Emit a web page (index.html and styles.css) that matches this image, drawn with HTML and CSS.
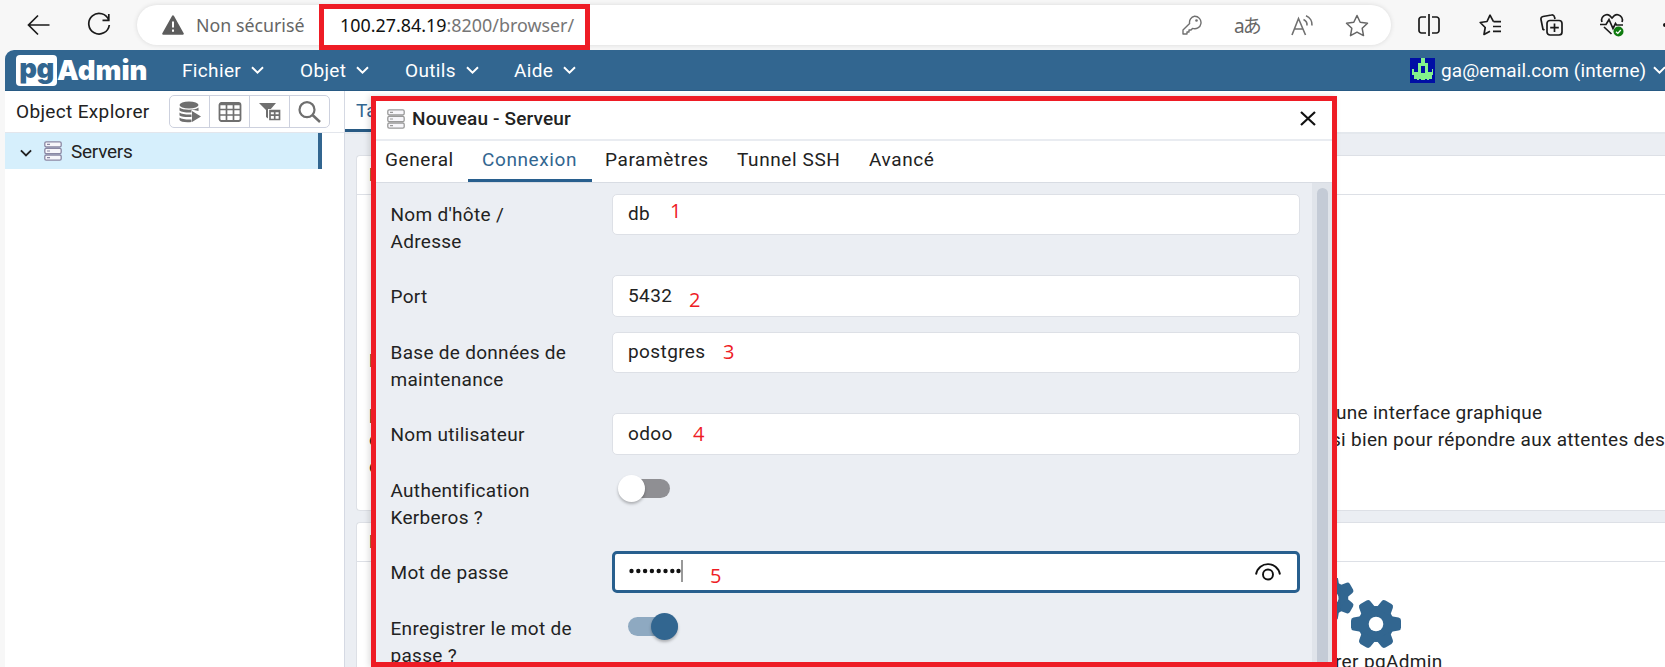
FILE: index.html
```
<!DOCTYPE html>
<html lang="fr">
<head>
<meta charset="utf-8">
<title>pgAdmin 4</title>
<link rel="stylesheet" href="styles.css">
</head>
<body>
<svg class="defs" width="0" height="0">
  <symbol id="chev" viewBox="0 0 13 8"><path d="M1 1.2 6.5 6.6 12 1.2" fill="none" stroke="currentColor" stroke-width="2"/></symbol>
  <symbol id="server" viewBox="0 0 18 20">
    <g fill="#f7f6fa" stroke="currentColor" stroke-width="1.3">
      <rect x=".8" y=".8" width="16.4" height="5.2" rx="1.4"/><rect x=".8" y="7.4" width="16.4" height="5.2" rx="1.4"/><rect x=".8" y="14" width="16.4" height="5.2" rx="1.4"/>
    </g>
    <path d="M3 3.4h3M3 10h3M3 16.6h3" stroke="currentColor" stroke-width="1.2"/>
  </symbol>
</svg>
<div class="window">
  <header class="browser">
    <svg class="nav-back" width="24" height="22" viewBox="0 0 24 22"><path d="M22.500 11H2M11 1.500 1.500 11l9.500 9.500" fill="none" stroke="#1b1b1b" stroke-width="1.700"/></svg>
    <svg class="nav-reload" width="24" height="26" viewBox="0 0 24 26"><path d="M21.800 8.300A10.300 10.300 0 1 0 22.300 13M21.800 2v6.300h-6.300" fill="none" stroke="#1b1b1b" stroke-width="1.700"/></svg>
    <div class="omnibox">
      <svg class="warn" width="22" height="20" viewBox="0 0 22 20"><path d="M11 1.300 20.800 18.700H1.200z" fill="#5d5d5d" stroke="#5d5d5d" stroke-width="2" stroke-linejoin="round"/><path d="M11 6.500v6M11 14.500v2.300" stroke="#fff" stroke-width="2"/></svg>
      <span class="insecure">Non sécurisé</span>
      <span class="url"><b>100.27.84.19</b>:8200/browser/</span>
      <div class="omni-icons">
        <svg class="i-key" width="20" height="20" viewBox="0 0 20 20"><path d="M12.500 1.200a6.300 6.300 0 1 1-2 12.200L9 15H7v2H5v2H1v-4l6.600-6.500a6.300 6.300 0 0 1 4.900-7.300z" fill="none" stroke="#707070" stroke-width="1.400" stroke-linejoin="round"/><circle cx="14.500" cy="5.500" r="1.300" fill="#707070"/></svg>
        <span class="i-tr">aあ</span>
        <svg class="i-read" width="23" height="21" viewBox="0 0 23 21"><path d="M1 20 7.500 3.500l7 16.500M3.500 14h8.500M12.500 4.500a6 6 0 0 1 3.500 6M15 .800a9.500 9.500 0 0 1 6 9.700" fill="none" stroke="#707070" stroke-width="1.600"/></svg>
        <svg class="i-star" width="24" height="23" viewBox="0 0 24 23"><path d="m12 1.500 3.200 6.700 7.300 1-5.300 5.100 1.300 7.300-6.500-3.500-6.500 3.500 1.300-7.300L1.500 9.200l7.300-1z" fill="none" stroke="#666" stroke-width="1.500" stroke-linejoin="round"/></svg>
      </div>
    </div>
    <div class="tools">
      <svg class="t-split" width="22" height="22" viewBox="0 0 22 22"><path d="M8 3H3.500A2.500 2.500 0 0 0 1 5.500v11A2.500 2.500 0 0 0 3.500 19H8M14 3h4.500A2.500 2.500 0 0 1 21 5.500v11a2.500 2.500 0 0 1-2.500 2.500H14M11 0v22" fill="none" stroke="#1b1b1b" stroke-width="1.700"/></svg>
      <svg class="t-fav" width="23" height="22" viewBox="0 0 23 22"><path d="M14.500 7.700 11 1.200 8 7.500 1.200 8.500l5 5-1.200 7L11 17.300M14.500 7.700H22M14 12.500h8M14 17.300h8" fill="none" stroke="#1b1b1b" stroke-width="1.700" stroke-linejoin="round"/></svg>
      <svg class="t-col" width="23" height="22" viewBox="0 0 23 22"><path d="M4.500 16 3 15.300 1 5.500a2.500 2.500 0 0 1 2-3L11.500 1a2.500 2.500 0 0 1 3 2l.5 2" fill="none" stroke="#1b1b1b" stroke-width="1.700"/><rect x="7" y="6.500" width="15" height="14.500" rx="3" fill="none" stroke="#1b1b1b" stroke-width="1.700"/><path d="M14.500 9.500v8.500M10.200 13.700h8.600" stroke="#1b1b1b" stroke-width="1.700"/></svg>
      <svg class="t-heart" width="24" height="24" viewBox="0 0 24 24"><path d="M2 9C0 4 6 0 9.500 2.500L12 5l2.500-2.500C18 0 24 4 22 9M0 11.500h6l3-5 4 9 2.500-5 1 1.500H23M4 14l7.500 7" fill="none" stroke="#1b1b1b" stroke-width="1.700"/><circle cx="18.500" cy="18.500" r="5" fill="#0f7b0f"/><path d="m16 18.700 1.800 1.700 3-3.400" fill="none" stroke="#fff" stroke-width="1.300"/></svg>
      <span class="t-more"></span>
    </div>
  </header>
  <div class="url-mark"></div>

  <div class="app">
    <nav class="menubar">
      <div class="logo"><span class="pg">pg</span><span class="admin">Admin</span></div>
      <span class="menu m1">Fichier<svg><use href="#chev"/></svg></span>
      <span class="menu m2">Objet<svg><use href="#chev"/></svg></span>
      <span class="menu m3">Outils<svg><use href="#chev"/></svg></span>
      <span class="menu m4">Aide<svg><use href="#chev"/></svg></span>
      <div class="user">
        <svg class="avatar" width="25" height="25" viewBox="0 0 25 25"><path fill="#000fa5" d="M0 0h25v25H0z"/><path fill="#83f28b" d="M11 0h4v5h3v9h4v-3h1v6h-1v4h-3v1h-2v-1h-2v1h-4v-1H9v1H7v-1H4v-4H2v-6h2v3h4V5h3z"/><path fill="#000fa5" d="M11 8h4v7h-4z"/></svg>
        <span class="mail">ga@email.com (interne)</span>
        <svg class="user-chev"><use href="#chev"/></svg>
      </div>
    </nav>
    <div class="main">
      <aside class="explorer">
        <div class="exp-head">
          <span class="exp-title">Object Explorer</span>
          <div class="btns">
            <span><svg width="22" height="22" viewBox="0 0 22 22" fill="#6f6f6f"><ellipse cx="10" cy="4" rx="9.500" ry="3.500"/><path d="M.5 6.500c3 3 16 3 19 0V10l-7-1.500v3C7 11.700 2.500 11 .5 9.500zM.5 11.500c2 1.500 6.500 2.200 12 2V16C7 16.300 2.500 15.800.5 14.500zM.5 16.500c2 1.500 6.500 2.200 12 2V21C6.500 21.500 1.500 21 .5 19zM13 10l9 5.500-9 5.500z"/></svg></span>
            <span><svg width="24" height="20" viewBox="0 0 24 20"><rect x="1.500" y="1" width="21" height="18" rx="2" fill="none" stroke="#6f6f6f" stroke-width="1.800"/><path d="M1.500 2.500h21M1.500 7.500h21M1.500 13h21M8.500 2v17M15.500 2v17" stroke="#6f6f6f" stroke-width="1.700"/></svg></span>
            <span><svg width="22" height="18" viewBox="0 0 22 18"><path d="M0 0h17l-6 7v10l-4-3V7z" fill="#6f6f6f"/><path d="M9 6h13v12H9z" fill="#fff"/><path d="M11 7.500h9.500v9H11zM11 8.500h9.500M11 12.200h9.500M15.700 8v8.500" fill="none" stroke="#6f6f6f" stroke-width="1.700"/></svg></span>
            <span><svg width="24" height="22" viewBox="0 0 24 22"><circle cx="9" cy="8.700" r="7.500" fill="none" stroke="#6f6f6f" stroke-width="2.200"/><path d="m14.500 14 7.500 7" stroke="#6f6f6f" stroke-width="2.500"/></svg></span>
          </div>
        </div>
        <div class="tree-row">
          <svg class="tree-chev"><use href="#chev"/></svg>
          <svg class="srv"><use href="#server"/></svg>
          <span>Servers</span>
        </div>
      </aside>
      <section class="dash">
        <div class="dash-tabs"><span class="dash-tab">Ta</span></div>
        <div class="card welcome">
          <div class="card-head">B</div>
          <p class="feat">F</p>
          <div class="wtext">
            <div class="wline"><span>p</span><span class="w1">une interface graphique</span></div>
            <div class="wline"><span>d</span><span class="w2">si bien pour répondre aux attentes des</span></div>
            <div class="wline"><span>d</span></div>
          </div>
        </div>
        <div class="card links">
          <div class="card-head">L</div>
          <div class="quick">
            <svg width="82" height="72" viewBox="0 0 82 72" fill="#326690">
              <g id="g" transform="translate(55 46)"><circle r="18"/><path id="tooth" d="M-8-14-6.500-22.500Q-6-25-3.500-25h7Q6-25 6.500-22.500L8-14z" transform="rotate(30)"/><use href="#tooth" transform="rotate(60)"/><use href="#tooth" transform="rotate(120)"/><use href="#tooth" transform="rotate(180)"/><use href="#tooth" transform="rotate(240)"/><use href="#tooth" transform="rotate(300)"/><circle r="7.300" fill="#fff"/></g>
              <use href="#g" transform="translate(11 20) rotate(30) scale(.9) translate(-55 -46)"/>
            </svg>
            <span>rer pgAdmin</span>
          </div>
        </div>
      </section>
    </div>
  </div>

  <div class="modal">
    <div class="modal-head">
      <svg class="srv"><use href="#server"/></svg>
      <span class="modal-title">Nouveau - Serveur</span>
      <svg class="close" width="16" height="15" viewBox="0 0 16 15"><path d="m1 1 14 13M15 1 1 14" stroke="#111" stroke-width="2.200"/></svg>
    </div>
    <div class="tabs">
      <span class="tab a">General</span><span class="tab b on">Connexion</span><span class="tab c">Paramètres</span><span class="tab d">Tunnel SSH</span><span class="tab e">Avancé</span>
    </div>
    <div class="body">
      <div class="form">
        <div class="row"><label>Nom d'hôte /<br>Adresse</label><div class="field">db<i class="n n1">1</i></div></div>
        <div class="row"><label>Port</label><div class="field">5432<i class="n n2">2</i></div></div>
        <div class="row"><label>Base de données de<br>maintenance</label><div class="field">postgres<i class="n n3">3</i></div></div>
        <div class="row"><label>Nom utilisateur</label><div class="field">odoo<i class="n n4">4</i></div></div>
        <div class="row"><label>Authentification<br>Kerberos ?</label><div class="switch off"><span></span></div></div>
        <div class="row"><label>Mot de passe</label><div class="field focus"><svg class="dots" width="54" height="24" viewBox="0 0 54 24"><g fill="#111"><circle cx="2.500" cy="12" r="2.200"/><circle cx="9.300" cy="12" r="2.200"/><circle cx="16.100" cy="12" r="2.200"/><circle cx="22.900" cy="12" r="2.200"/><circle cx="29.700" cy="12" r="2.200"/><circle cx="36.500" cy="12" r="2.200"/><circle cx="43.300" cy="12" r="2.200"/><circle cx="49.500" cy="12" r="2.200"/></g><path d="M53 1v22" stroke="#777" stroke-width="1.500"/></svg><i class="n n5">5</i><svg class="eye" width="26" height="18" viewBox="0 0 26 18"><path d="M1 11.500C3.500-2.300 22.500-2.300 25 11.500" fill="none" stroke="#111" stroke-width="1.900"/><circle cx="13" cy="11.500" r="5" fill="none" stroke="#111" stroke-width="1.900"/></svg></div></div>
        <div class="row"><label>Enregistrer le mot de<br>passe ?</label><div class="switch"><span></span></div></div>
      </div>
      <div class="scroll"><div class="thumb"></div></div>
    </div>
  </div>
</div>
</body>
</html>
```
FILE: styles.css
```
* { box-sizing: border-box; }
body { margin: 0; font-family: Roboto, sans-serif; font-size: 19px; color: #222; }
.defs { position: absolute; }
.window { position: relative; width: 1665px; height: 667px; overflow: hidden; background: #f7f7f7; display: flex; flex-direction: column; }

.browser { height: 50px; flex: none; display: flex; align-items: center; padding-left: 27px; font-family: "Noto Sans", "Open Sans", sans-serif; }
.browser svg { flex: none; }
.nav-reload { margin-left: 36px; }
.omnibox { margin-left: 26px; width: 1254px; height: 40px; border-radius: 20px; background: #fff; box-shadow: 0 0 5px #0000001f; display: flex; align-items: center; padding-left: 25px; flex: none; white-space: nowrap; }
.insecure { color: #666; font-size: 17.8px; margin-left: 12px; width: 144px; }
.url { color: #767676; font-size: 17.9px; }
.url b { font-weight: 400; color: #111; }
.omni-icons { margin-left: auto; margin-right: 22px; display: flex; align-items: center; }
.i-tr { font: 19px "Noto Sans", "Noto Sans CJK JP", sans-serif; color: #666; margin-left: 32px; width: 25px; letter-spacing: -2px; }
.i-read { margin-left: 32px; }
.i-star { margin-left: 31px; }
.tools { display: flex; align-items: center; margin-left: 27px; }
.t-fav { margin-left: 39px; }
.t-col { margin-left: 38px; }
.t-heart { margin-left: 37px; }
.t-more { width: 4px; height: 4px; border-radius: 2px; background: #111; margin-left: 39px; flex: none; }
.url-mark { position: absolute; left: 319px; top: 4px; width: 271px; height: 46px; border: 5px solid #ee1c25; z-index: 3; }

.app { margin-left: 5px; flex: 1; display: flex; flex-direction: column; background: #fff; border-radius: 9px 0 0 0; overflow: hidden; }
.menubar { height: 41px; flex: none; background: #326690; border-bottom: 1px solid #285a84; color: #fff; display: flex; align-items: center; padding-left: 11px; white-space: nowrap; }
.logo { display: flex; align-items: center; width: 166px; font-family: Inter, sans-serif; font-weight: 900; font-size: 27.500px; }
.pg { background: #fff; color: #326690; width: 41px; height: 31px; border-radius: 4px; line-height: 26px; text-align: center; letter-spacing: -.5px; }
.menu { display: flex; align-items: center; letter-spacing: .35px; }
.menu svg { width: 13px; height: 8px; margin-left: 10px; }
.m1 { width: 118px; } .m2 { width: 105px; } .m3 { width: 109px; }
.user { margin-left: auto; display: flex; align-items: center; width: 255px; flex: none; }
.avatar { flex: none; }
.mail { margin-left: 6px; width: 205px; letter-spacing: .1px; }
.user-chev { width: 13px; height: 8px; margin-left: 7px; flex: none; }
.main { flex: 1; display: flex; min-height: 0; }
.explorer { width: 340px; border-right: 1px solid #d5d9e3; flex: none; }
.exp-head { height: 42px; display: flex; align-items: center; border-bottom: 1px solid #e3e6ec; padding-left: 11px; }
.exp-title { width: 153px; letter-spacing: .35px; }
.btns { display: flex; width: 161px; height: 33px; border: 1px solid #cdd1de; border-radius: 5px; }
.btns span { flex: 1; display: flex; align-items: center; justify-content: center; border-left: 1px solid #cdd1de; }
.btns span:first-child { border: 0; }
.tree-row { height: 36px; width: 317px; background: #d6effc; border-right: 4px solid #326690; display: flex; align-items: center; padding-left: 15px; }
.tree-chev { width: 12px; height: 8px; margin-top: 3px; }
.srv { width: 18px; height: 20px; color: #8a87a3; margin-left: 12px; }
.tree-row span { margin-left: 9px; letter-spacing: -.25px; }

.dash { flex: 1; background: #ebeef3; min-width: 0; white-space: nowrap; overflow: hidden; }
.dash-tabs { height: 43px; background: #fff; border-bottom: 2px solid #e4e8ed; display: flex; }
.dash-tab { height: 41px; width: 60px; padding: 9px 11px; line-height: 22px; color: #326690; border-bottom: 3px solid #285a84; }
.card { margin-left: 11px; background: #fff; border: 1px solid #dde0e6; border-right: 0; border-radius: 4px 0 0 4px; }
.card-head { height: 39px; line-height: 38px; padding-left: 12px; border-bottom: 1px solid #dde0e6; font-weight: 500; }
.welcome { margin-top: 21px; height: 356px; }
.feat { margin: 152px 0 0 12px; line-height: 28px; height: 28px; font-weight: 500; }
.wtext { margin-top: 24px; }
.wline { display: flex; line-height: 27px; padding-left: 12px; letter-spacing: .3px; }
.wline span:first-child { width: 967px; }
.w2 { margin-left: 9px; }
.links { margin-top: 11px; height: 180px; }
.quick { display: flex; flex-direction: column; margin: 16px 0 0 964px; }
.quick span { margin: 0 0 0 14px; letter-spacing: .35px; }

.modal { position: absolute; left: 371px; top: 96px; width: 966px; height: 571px; border: 5px solid #ee1c25; background: #fff; display: flex; flex-direction: column; z-index: 2; box-shadow: -2px 0 6px #0002; }
.modal-head { height: 40px; flex: none; display: flex; align-items: center; border-bottom: 2px solid #e9ecf1; padding: 0 16px 3px 0; }
.modal-head .srv { margin-left: 11px; color: #999; }
.modal-title { margin-left: 7px; font-weight: 500; letter-spacing: .15px; }
.close { margin-left: auto; }
.tabs { height: 42px; flex: none; border-bottom: 1px solid #d8dce3; display: flex; letter-spacing: .6px; color: #222; }
.tab { line-height: 38px; height: 41px; white-space: nowrap; }
.a { width: 83px; padding-left: 9px; margin-right: 9px; flex: none; }
.b { width: 124px; padding-left: 14px; }
.on { color: #326690; border-bottom: 3px solid #285f8e; }
.c { margin-left: 13px; width: 132px; }
.d { width: 132px; }
.body { flex: 1; min-height: 0; background: #ebeef3; display: flex; overflow: hidden; }
.form { flex: 1; display: flex; flex-direction: column; gap: 14.800px; padding: 10.500px 12px 0 14px; height: 600px; }
.row { display: flex; align-items: flex-start; flex: none; }
label { width: 222px; padding: 7.500px 0 5.500px .5px; line-height: 27px; letter-spacing: .3px; }
.field { width: 688px; height: 41.5px; background: #fff; border: 1px solid #dde0e6; border-radius: 5px; padding-left: 15px; display: flex; align-items: center; position: relative; letter-spacing: .4px; padding-bottom: 1px; }
.focus { border: 3px solid #285f8e; padding-left: 14px; }
.dots { margin-top: -1px; }
.eye { margin-left: auto; margin-right: 16px; }
.n { position: absolute; font: 20px "Open Sans", sans-serif; color: #ee1c25; line-height: 24px; }
.n1 { left: 57px; top: 4px; } .n2 { left: 76px; top: 12px; } .n3 { left: 110px; top: 7px; } .n4 { left: 80px; top: 8px; } .n5 { left: 95px; top: 10px; }
.switch { margin: 9.500px 0 0 16px; width: 50px; height: 19px; border-radius: 10px; background: #8ea9c1; position: relative; }
.switch span { position: absolute; right: 0; top: -4px; width: 27px; height: 27px; border-radius: 50%; background: #326690; box-shadow: 0 2px 3px #0004; }
.off { background: #8f8f93; margin-left: 8px; }
.off span { right: auto; left: -2px; background: #fff; }
.scroll { width: 20px; background: #e0e4ea; padding: 5px 4px 0 5px; }
.thumb { height: 600px; border-radius: 6px 6px 0 0; background: #c4cbd6; }
```
